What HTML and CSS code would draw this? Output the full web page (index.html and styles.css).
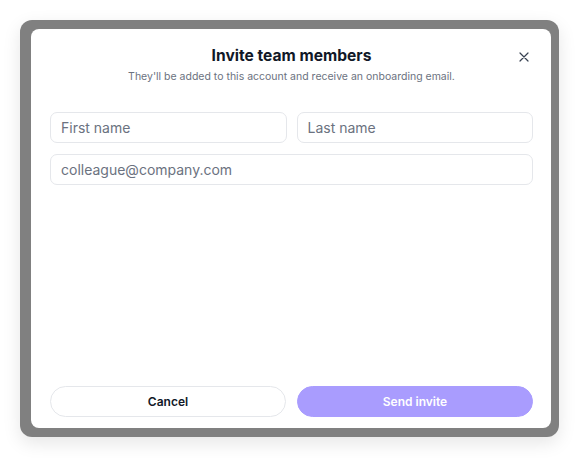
FILE: index.html
```html
<!DOCTYPE html>
<html lang="en">
<head>
<meta charset="utf-8">
<title>Invite team members</title>
<link rel="stylesheet" href="styles.css">
</head>
<body>
<div class="frame">
  <div class="card">
    <button class="close" aria-label="Close">
      <svg width="10" height="10" viewBox="0 0 10 10"><path d="M1 1 L9 9 M9 1 L1 9" stroke="#374151" stroke-width="1.2" stroke-linecap="round" fill="none"/></svg>
    </button>
    <div class="header">
      <h1 class="title">Invite team members</h1>
      <p class="subtitle">They'll be added to this account and receive an onboarding email.</p>
    </div>
    <div class="fields">
      <div class="row">
        <input class="input" type="text" placeholder="First name">
        <input class="input" type="text" placeholder="Last name">
      </div>
      <input class="input input-full" type="email" placeholder="colleague@company.com">
    </div>
    <div class="footer">
      <button class="btn btn-cancel">Cancel</button>
      <button class="btn btn-send">Send invite</button>
    </div>
  </div>
</div>
</body>
</html>
```

FILE: styles.css
```css
* { box-sizing: border-box; }
html, body { margin: 0; padding: 0; background: #ffffff; }
body {
  font-family: Inter, "Noto Sans", sans-serif;
  width: 579px;
  height: 458px;
  overflow: hidden;
}
.frame {
  margin: 20px 0 0 20px;
  width: 539px;
  height: 417px;
  background: #808080;
  border-radius: 12px;
  padding: 9px 8px 9px 11px;
  box-shadow: 0 6px 18px rgba(0,0,0,0.10);
}
.card {
  position: relative;
  background: #ffffff;
  border-radius: 8px;
  height: 399px;
  display: flex;
  flex-direction: column;
  padding: 0 18px 11px 19px;
}
.close {
  position: absolute;
  top: 22px;
  right: 22px;
  width: 11px;
  height: 11px;
  padding: 0;
  border: 0;
  background: none;
  display: flex;
  align-items: center;
  justify-content: center;
}
.header {
  padding-top: 17px;
  text-align: center;
}
.title {
  margin: 0;
  font-size: 15.6px;
  line-height: 20px;
  font-weight: 700;
  color: #111827;
}
.subtitle {
  margin: 3px 0 0;
  font-size: 10.5px;
  line-height: 16px;
  color: #6b7280;
}
.fields {
  margin-top: 27px;
  display: flex;
  flex-direction: column;
  gap: 11px;
}
.row {
  display: flex;
  gap: 10px;
}
.input {
  flex: 1 1 0;
  min-width: 0;
  height: 31px;
  border: 1px solid #e5e7eb;
  border-radius: 7px;
  padding: 0 10px;
  font-family: Inter, "Noto Sans", sans-serif;
  font-size: 14px;
  color: #111827;
  background: #ffffff;
  outline: none;
}
.input-full {
  flex: none;
  width: 100%;
}
.input::placeholder { color: #6b7280; }
.footer {
  margin-top: auto;
  display: flex;
  gap: 11px;
}
.btn {
  flex: 1;
  height: 31px;
  border-radius: 999px;
  font-family: Inter, "Noto Sans", sans-serif;
  font-size: 12px;
  font-weight: 600;
  cursor: pointer;
}
.btn-cancel {
  background: #ffffff;
  border: 1px solid #e5e7eb;
  color: #111827;
}
.btn-send {
  background: #a99cfe;
  border: 1px solid #a99cfe;
  color: #ffffff;
}
```
